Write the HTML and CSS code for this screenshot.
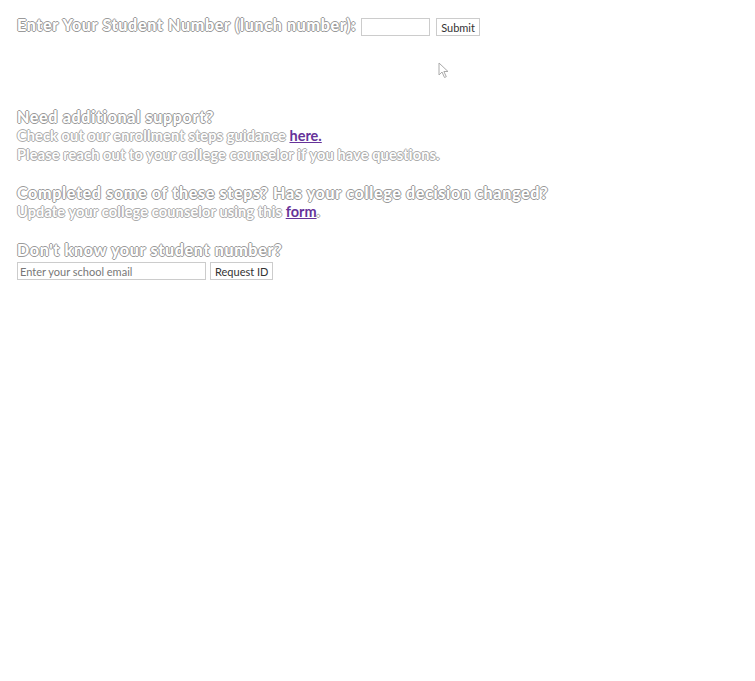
FILE: index.html
```html
<!DOCTYPE html>
<html>
<head>
<meta charset="utf-8">
<link rel="stylesheet" href="styles.css">
</head>
<body>
<div class="page">
  <form class="lookup">
    <label class="title">Enter Your Student Number (lunch number):</label>
    <input class="num" type="text">
    <button class="btn" type="button">Submit</button>
  </form>

  <section class="info">
    <div class="head">Need additional support?</div>
    <div class="line">Check out our enrollment steps guidance <a href="#">here.</a></div>
    <div class="line">Please reach out to your college counselor if you have questions.</div>
    <div class="blank"></div>
    <div class="head">Completed some of these steps? Has your college decision changed?</div>
    <div class="line">Update your college counselor using this <a href="#">form</a>.</div>
    <div class="blank"></div>
    <div class="head">Don't know your student number?</div>
    <form class="req">
      <input class="email" type="text" placeholder="Enter your school email">
      <button class="btn" type="button">Request ID</button>
    </form>
  </section>
</div>
<svg class="cursor" width="12" height="18" viewBox="0 0 12 18"><path d="M1 1 L1 13 L4 10 L6.5 15.5 L8.3 14.7 L5.9 9.5 L10 9.5 Z" fill="#fff" stroke="#aaa" stroke-width="1"/></svg>
</body>
</html>
```

FILE: styles.css
```css
html, body { margin: 0; padding: 0; background: #fff; }
body { font-family: "Lato", "Liberation Sans", sans-serif; }
.page { padding: 18px 17px; }
.lookup { display: flex; align-items: flex-start; gap: 5px; height: 18px; margin: 0; }
.title, .head {
  font-weight: 900; font-size: 16px; color: #fff;
  text-shadow: -1px 0 #9a9a9a, 1px 0 #9a9a9a, 0 -1px #9a9a9a, 0 1px #9a9a9a;
  line-height: 19px;
  letter-spacing: 0.69px;
}
.title { margin-top: -3px; }
.num { width: 63px; height: 14px; border: 1px solid #ccc; padding: 1px 2px; margin: 0; }
.btn {
  font-family: "Lato", "Liberation Sans", sans-serif; font-size: 11px; color: #333;
  background: #fff; border: 1px solid #ccc; height: 18px; padding: 0 4px; margin: 0;
}
.lookup .btn { margin-left: 1px; }
.info { margin-top: 71px; }
.line {
  font-size: 14.5px; font-weight: 700; color: #fff; line-height: 19px; letter-spacing: 0.14px;
  text-shadow: -1px 0 #acacac, 1px 0 #acacac, 0 -1px #acacac, 0 1px #acacac;
}
.line a { color: #663399; font-weight: 700; text-shadow: none; letter-spacing: 0; }
.blank { height: 19px; }
.req { display: flex; gap: 4px; margin: 3px 0 0; }
.email {
  width: 183px; height: 14px; border: 1px solid #ccc; padding: 1px 2px; margin: 0;
  font-family: "Lato", "Liberation Sans", sans-serif; font-size: 11px;
}
.email::placeholder { color: #777; }
.cursor { position: absolute; left: 438px; top: 62px; }
```
